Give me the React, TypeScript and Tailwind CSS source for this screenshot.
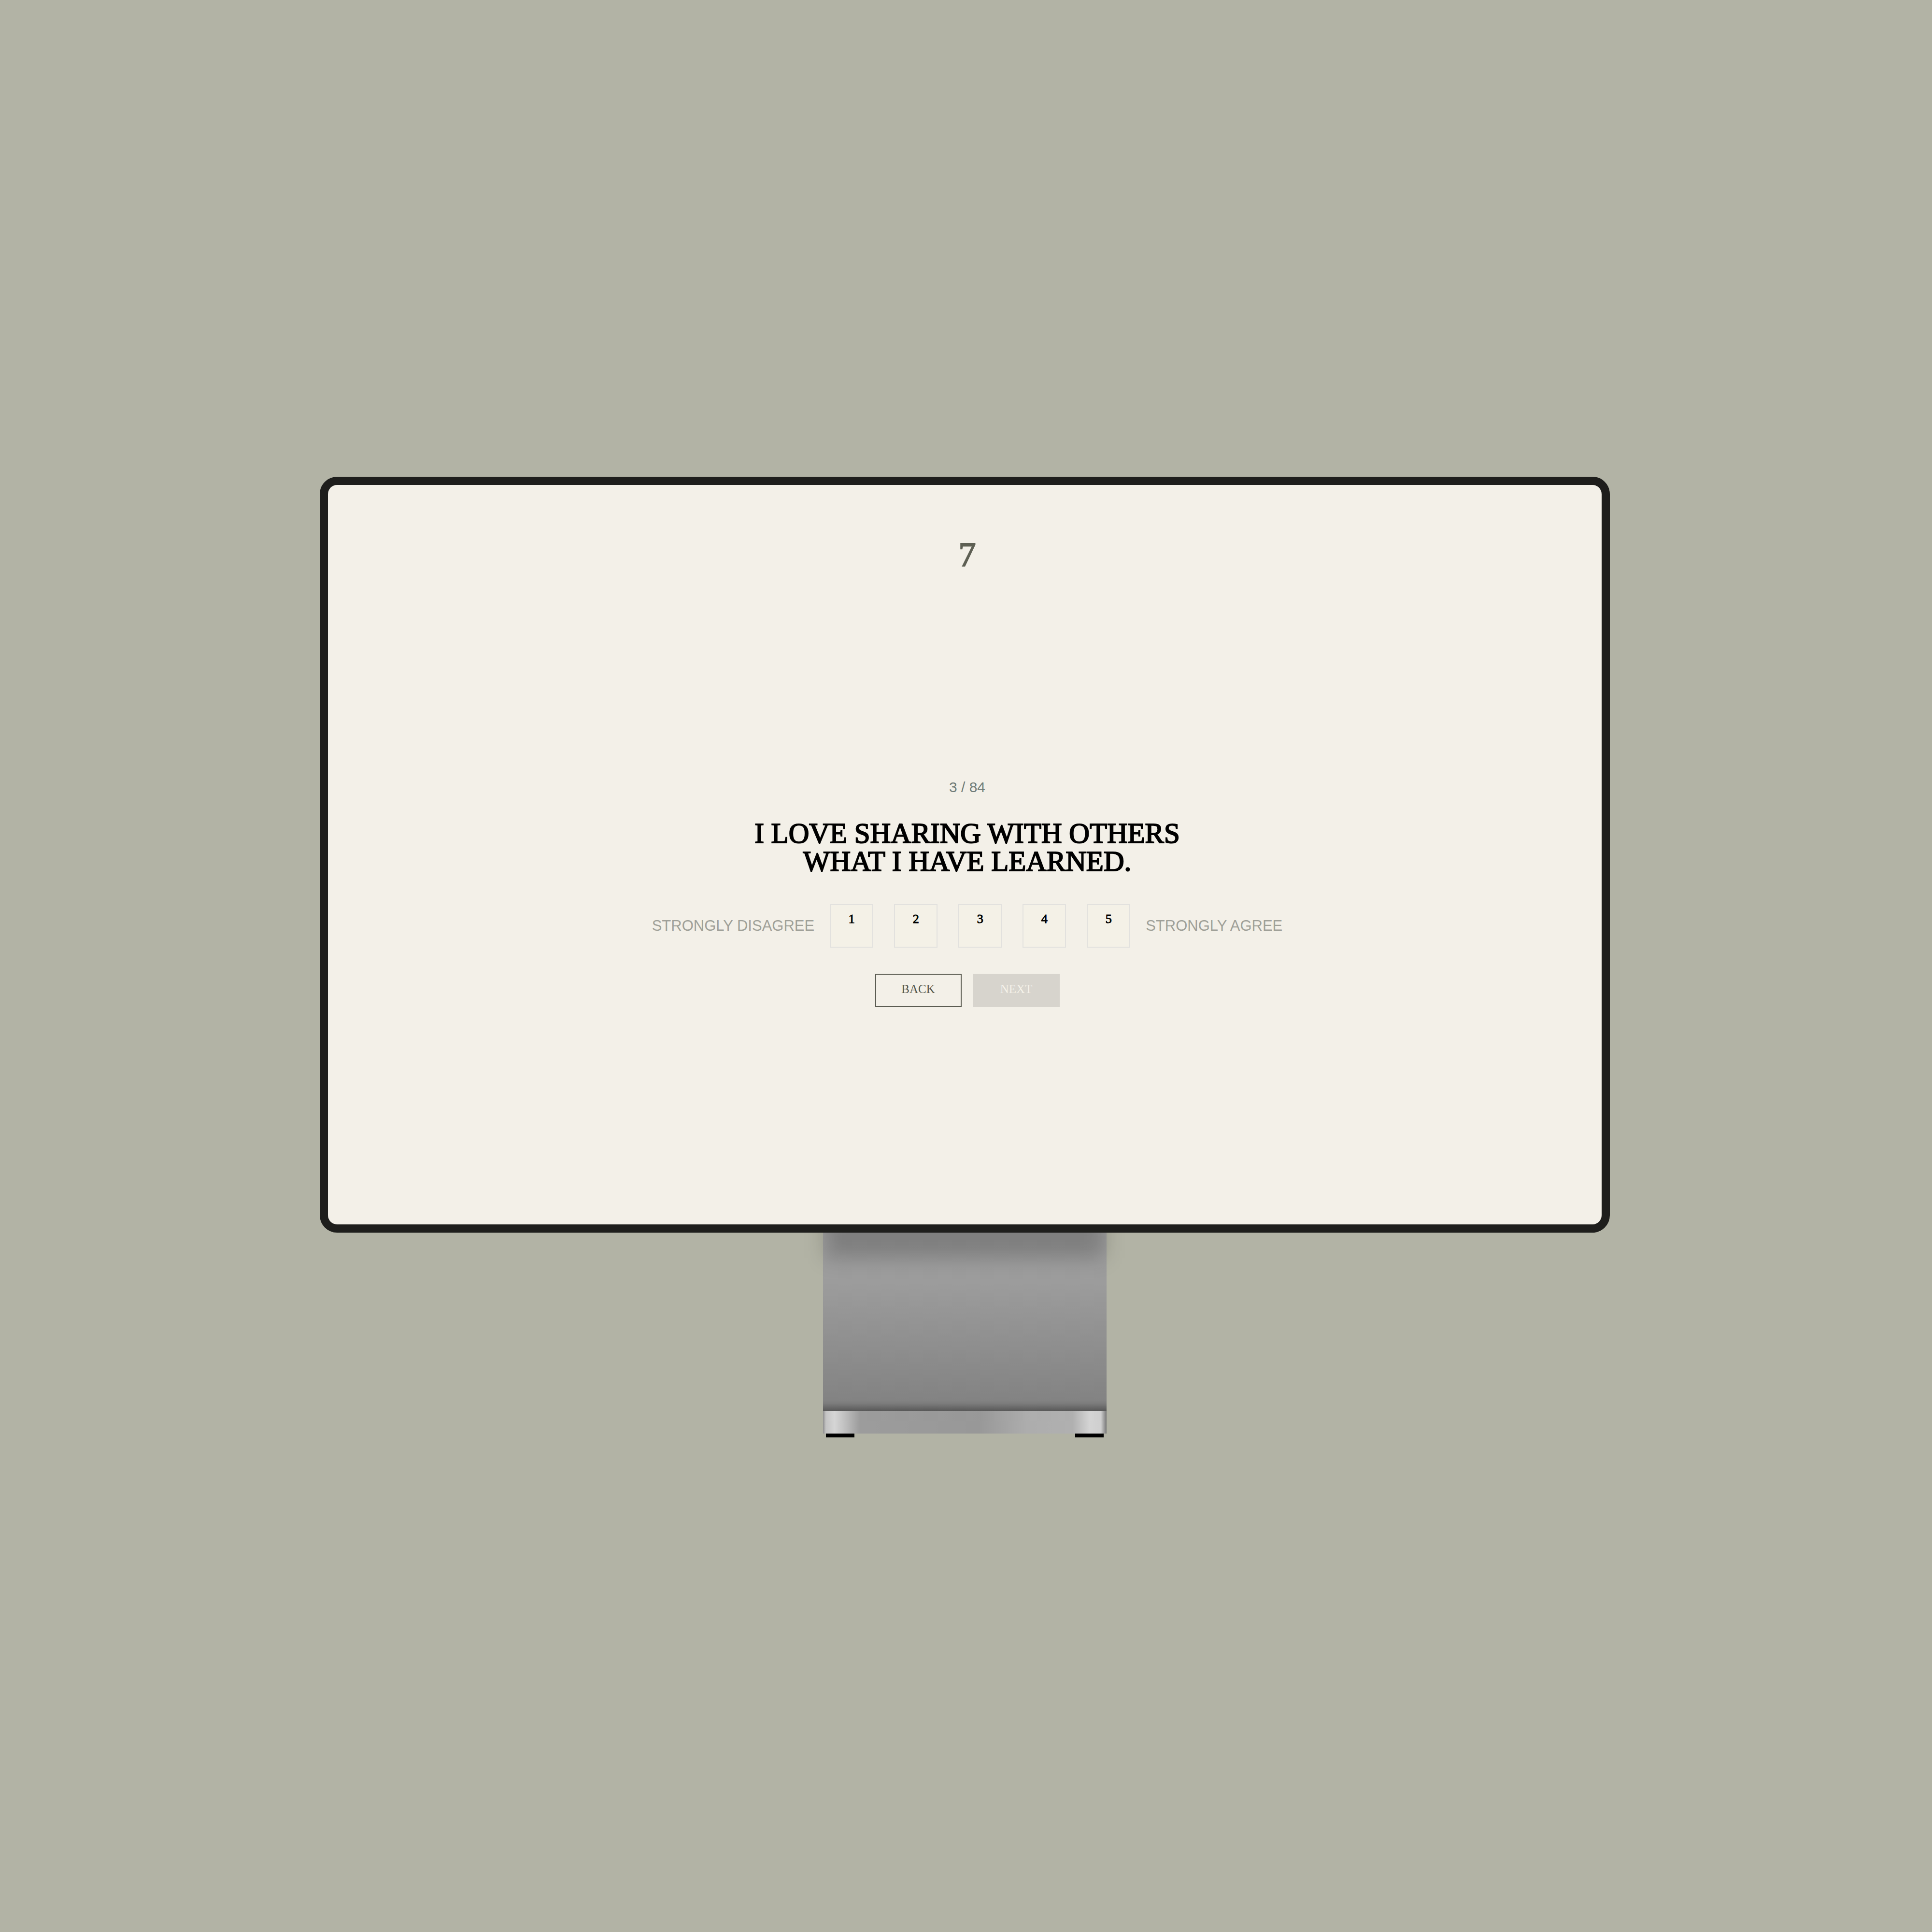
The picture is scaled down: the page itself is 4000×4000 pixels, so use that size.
import { useState } from "react";

const SCALE = [1, 2, 3, 4, 5];

function Scale() {
  const [selected, setSelected] = useState<number | null>(null);

  return (
    <div className="mt-[60px] flex items-center justify-center gap-[32px]">
      <span className="text-[31px] leading-9 text-[#9fa098]">STRONGLY DISAGREE</span>
      <div className="flex gap-[43px]">
        {SCALE.map((value) => (
          <button
            key={value}
            type="button"
            aria-pressed={selected === value}
            onClick={() => setSelected(value)}
            className="flex size-[90px] items-start justify-center border-2 border-[#e2e1de] bg-[#f4f1e7] pt-4 font-['Liberation_Serif',serif] text-[26px] leading-[26px] text-black [-webkit-text-stroke:1px]"
          >
            {value}
          </button>
        ))}
      </div>
      <span className="text-[31px] leading-9 text-[#9fa098]">STRONGLY AGREE</span>
    </div>
  );
}

function Question() {
  return (
    <main className="flex flex-col items-center rounded-[19px] bg-[#f3f0e8] pt-[108px] pb-[450px] pl-[10px] font-['Liberation_Sans',sans-serif]">
      <p className="font-['Liberation_Serif',serif] text-[72px] leading-[72px] text-[#5e6054] [-webkit-text-stroke:2px]">
        7
      </p>
      <p className="mt-[428px] text-[30px] leading-9 text-[#6f7b77]">3 / 84</p>
      <h1 className="mt-[48px] text-center font-['Liberation_Serif',serif] text-[59px] leading-[58px] text-black [-webkit-text-stroke:2px]">
        I LOVE SHARING WITH OTHERS
        <br />
        WHAT I HAVE LEARNED.
      </h1>
      <Scale />
      <div className="mt-[54px] flex gap-[24px] font-['Liberation_Serif',serif] text-[25px] leading-[25px]">
        <button
          type="button"
          className="h-[69px] w-[179px] border-2 border-[#5b5c52] pb-[6px] text-[#55564c]"
        >
          BACK
        </button>
        <button type="button" disabled className="h-[69px] w-[179px] bg-[#d7d4cd] pb-[6px] text-[#f5f2e9]">
          NEXT
        </button>
      </div>
    </main>
  );
}

function Stand() {
  return (
    <div className="w-[587px]">
      <div className="relative h-[369px] bg-[linear-gradient(to_bottom,#9f9f9f_0%,#9c9c9c_28%,#838383_94%,#7b7b7b_96%,#595959_100%)]">
        {/* shadow cast by the display */}
        <div className="absolute inset-x-1 -top-10 h-[92px] bg-black/20 blur-[20px]" />
      </div>
      <div className="h-[47px] bg-[linear-gradient(to_right,#8f8f8f_0%,#c4c4c4_1%,#d5d5d5_4%,#c4c4c4_7%,#9c9c9c_13%,#989898_55%,#adadad_72%,#b0b0b0_88%,#d4d4d4_94%,#cfcfcf_98%,#777777_100%)]" />
      <div className="flex justify-between px-[6px]">
        <div className="h-2 w-[59px] bg-black" />
        <div className="h-2 w-[59px] bg-black" />
      </div>
    </div>
  );
}

export default function App() {
  return (
    <div className="flex min-h-screen flex-col items-center justify-center bg-[#b2b3a5] pr-[5px] pb-[37px]">
      <div className="relative z-10 w-full max-w-[2671px] rounded-[36px] border-[17px] border-[#1e1e1c] bg-[#1e1e1c]">
        <Question />
      </div>
      <Stand />
    </div>
  );
}
